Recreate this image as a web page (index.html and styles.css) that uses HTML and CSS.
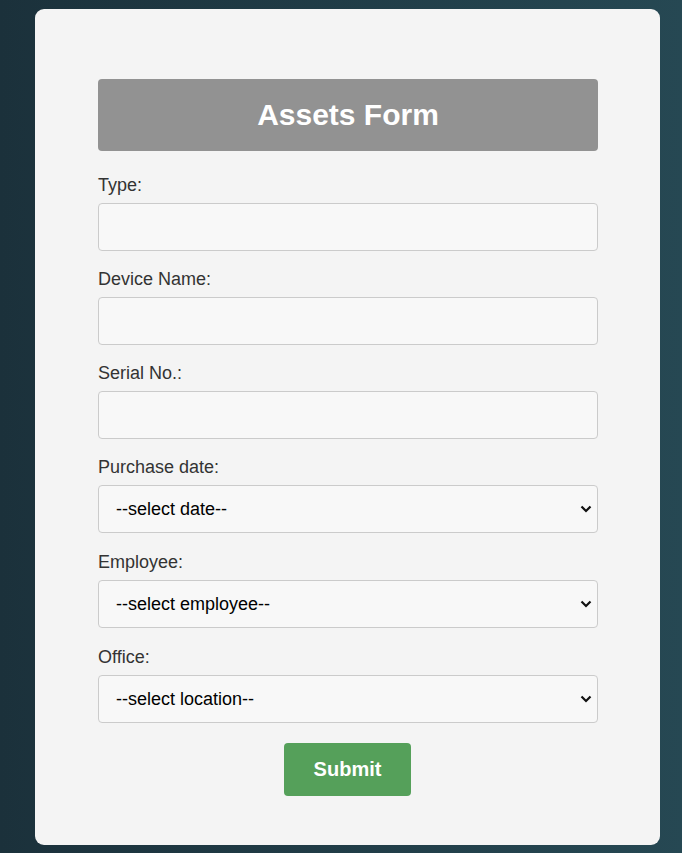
FILE: index.html
```html
<!DOCTYPE html>
<html>
<head>
<meta charset="utf-8">
<link rel="stylesheet" href="styles.css">
</head>
<body>
<div class="card">
  <h1 class="title">Assets Form</h1>
  <form class="form">
    <div class="group">
      <label class="label">Type:</label>
      <input class="field" type="text">
    </div>
    <div class="group">
      <label class="label">Device Name:</label>
      <input class="field" type="text">
    </div>
    <div class="group">
      <label class="label">Serial No.:</label>
      <input class="field" type="text">
    </div>
    <div class="group sel">
      <label class="label">Purchase date:</label>
      <div class="select-wrap">
        <select class="field select"><option>--select date--</option></select>
        <svg class="chev" width="12" height="8" viewBox="0 0 12 8"><path d="M1.5 1.5 L6 6 L10.5 1.5" fill="none" stroke="#111" stroke-width="2.2"/></svg>
      </div>
    </div>
    <div class="group sel">
      <label class="label">Employee:</label>
      <div class="select-wrap">
        <select class="field select"><option>--select employee--</option></select>
        <svg class="chev" width="12" height="8" viewBox="0 0 12 8"><path d="M1.5 1.5 L6 6 L10.5 1.5" fill="none" stroke="#111" stroke-width="2.2"/></svg>
      </div>
    </div>
    <div class="group sel last">
      <label class="label">Office:</label>
      <div class="select-wrap">
        <select class="field select"><option>--select location--</option></select>
        <svg class="chev" width="12" height="8" viewBox="0 0 12 8"><path d="M1.5 1.5 L6 6 L10.5 1.5" fill="none" stroke="#111" stroke-width="2.2"/></svg>
      </div>
    </div>
    <div class="actions">
      <button class="submit" type="button">Submit</button>
    </div>
  </form>
</div>
</body>
</html>
```

FILE: styles.css
```css
html, body {
  margin: 0;
  height: 100%;
}
body {
  background: linear-gradient(90deg, #1b313b 0%, #264853 100%);
  font-family: "Liberation Sans", Arial, sans-serif;
  padding: 9px 22px 0 35px;
  box-sizing: border-box;
}
.card {
  background: #f4f4f4;
  border-radius: 9px;
  padding: 70px 62px 49px 63px;
  box-sizing: border-box;
  height: 836px;
}
.title {
  margin: 0;
  background: #929292;
  color: #fff;
  border-radius: 4px;
  height: 72px;
  display: flex;
  align-items: center;
  justify-content: center;
  font-size: 30px;
  font-weight: bold;
}
.form {
  display: flex;
  flex-direction: column;
  padding-top: 24px;
}
.group {
  display: flex;
  flex-direction: column;
  margin-bottom: 18px;
}
.group.sel { margin-bottom: 19px; }
.group.last { margin-bottom: 20px; }
.label {
  font-size: 18px;
  color: #333;
  line-height: 21px;
  margin-bottom: 7px;
}
.field {
  width: 100%;
  height: 48px;
  box-sizing: border-box;
  border: 1px solid #cbcbcb;
  border-radius: 4px;
  background: #f8f8f8;
  font-family: "Liberation Sans", Arial, sans-serif;
  font-size: 18px;
  color: #000;
  padding: 0 12px;
  margin: 0;
}
.select-wrap {
  position: relative;
  height: 48px;
}
.select {
  -webkit-appearance: none;
  appearance: none;
  padding-left: 17px;
  display: block;
}
.chev {
  position: absolute;
  right: 6px;
  top: 20px;
  pointer-events: none;
}
.actions {
  display: flex;
  justify-content: center;
}
.submit {
  width: 127px;
  height: 53px;
  margin-right: 1px;
  background: #55a05a;
  color: #fff;
  border: none;
  border-radius: 4px;
  font-family: "Liberation Sans", Arial, sans-serif;
  font-size: 20px;
  font-weight: bold;
}
```
